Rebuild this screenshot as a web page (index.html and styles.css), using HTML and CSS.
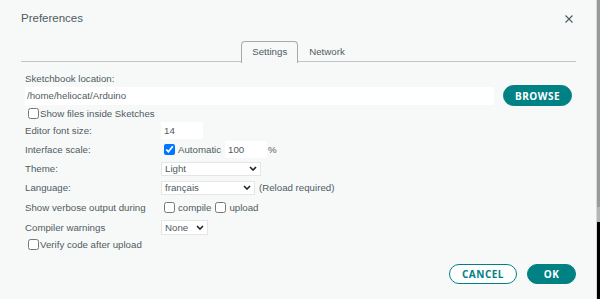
FILE: index.html
```html
<!DOCTYPE html>
<html lang="en">
<head>
  <meta charset="UTF-8" />
  <title>Preferences</title>
  <link rel="stylesheet" href="styles.css">
</head>
<body>

<div class="screen">
  <div class="dialog">
    <div class="dialog-head">
      <span class="title">Preferences</span>
      <svg class="close" width="8" height="8" viewBox="0 0 8 8">
        <path d="M0.5 0.5 L7.5 7.5 M7.5 0.5 L0.5 7.5" stroke="#4e5b61" stroke-width="1.1" fill="none" />
      </svg>
    </div>

    <div class="tabs">
      <div class="tab active">Settings</div>
      <div class="tab">Network</div>
    </div>

    <div class="settings">
      <div class="label-top">Sketchbook location:</div>
      <div class="path-row">
        <input type="text" class="textbox path" value="/home/heliocat/Arduino" />
        <button class="btn primary browse">BROWSE</button>
      </div>
      <label class="check-row"><input type="checkbox" /> Show files inside Sketches</label>

      <div class="row">
        <span class="row-label">Editor font size:</span>
        <input type="text" class="textbox small" value="14" />
      </div>
      <div class="row">
        <span class="row-label">Interface scale:</span>
        <input type="checkbox" class="box" checked />
        <span class="box-text">Automatic</span>
        <input type="text" class="textbox small scale" value="100" />
        <span class="unit">%</span>
      </div>
      <div class="row">
        <span class="row-label">Theme:</span>
        <div class="select theme">
          <span>Light</span>
          <svg width="8" height="5" viewBox="0 0 8 5"><path d="M1 1 L4 4 L7 1" stroke="#222" stroke-width="1.6" fill="none" /></svg>
        </div>
      </div>
      <div class="row">
        <span class="row-label">Language:</span>
        <div class="select language">
          <span>français</span>
          <svg width="8" height="5" viewBox="0 0 8 5"><path d="M1 1 L4 4 L7 1" stroke="#222" stroke-width="1.6" fill="none" /></svg>
        </div>
        <span class="note">(Reload required)</span>
      </div>
      <div class="row verbose">
        <span class="row-label">Show verbose output during</span>
        <input type="checkbox" class="box" />
        <span class="box-text">compile</span>
        <input type="checkbox" class="box second" />
        <span class="box-text">upload</span>
      </div>
      <div class="row">
        <span class="row-label">Compiler warnings</span>
        <div class="select warnings">
          <span>None</span>
          <svg width="8" height="5" viewBox="0 0 8 5"><path d="M1 1 L4 4 L7 1" stroke="#222" stroke-width="1.6" fill="none" /></svg>
        </div>
      </div>
      <label class="check-row verify"><input type="checkbox" /> Verify code after upload</label>
    </div>

    <div class="footer">
      <button class="btn outline">CANCEL</button>
      <button class="btn primary ok">OK</button>
    </div>
  </div>
  <div class="edge"></div>
</div>

</body>
</html>
```

FILE: styles.css
```css
body {
  margin: 0;
  font-family: 'Liberation Sans', Arial, sans-serif;
  font-size: 9.7px;
  color: #505b60;
  background-color: #f7f9f9;
  overflow: hidden;
}

.screen {
  display: flex;
  width: 600px;
  height: 299px;
}

.dialog {
  flex: 1;
  padding: 0 20px 0 21px;
  background-color: #f7f9f9;
}

.edge {
  width: 3px;
  border-left: 1px solid #d8dada;
  background: linear-gradient(#999b9b 0 207px, #b4b6b6 207px 222px, #000 222px);
}

.dialog-head {
  height: 41px;
  box-sizing: border-box;
  padding-top: 11px;
  display: flex;
  justify-content: space-between;
  align-items: flex-start;
}

.title {
  font-size: 11.5px;
  line-height: 14px;
  color: #4e5b61;
}

.close {
  margin-top: 4px;
  margin-right: 3px;
}

.tabs {
  display: flex;
  justify-content: center;
  height: 20px;
  border-bottom: 1px solid #c3c5c5;
}

.tab {
  padding: 0 10px;
  line-height: 20px;
  height: 20px;
  border: 1px solid transparent;
  border-bottom: none;
  border-radius: 4px 4px 0 0;
}

.tab.active {
  border-color: #a7aaaa;
  background-color: #f7f9f9;
  height: 21px;
}

.settings {
  padding: 0 4px;
  margin-top: 11px;
}

.label-top {
  line-height: 12px;
}

.path-row {
  display: flex;
  align-items: center;
  height: 21px;
}

.textbox {
  border: none;
  outline: none;
  background-color: #fff;
  font-family: 'Liberation Sans', Arial, sans-serif;
  font-size: 9.7px;
  color: #505b60;
  margin: 0;
  box-sizing: border-box;
}

.path {
  flex: 1;
  height: 18px;
  padding: 0 2px;
}

.small {
  width: 42px;
  height: 17px;
  padding: 0 3px;
}

.scale {
  margin-left: 4px;
}

.btn {
  font-family: 'Open Sans', sans-serif;
  font-weight: bold;
  font-size: 10px;
  letter-spacing: 0.5px;
  border-radius: 11px;
  padding: 0;
  cursor: pointer;
}

.primary {
  background-color: #008184;
  border: 1.5px solid #008184;
  color: #fff;
}

.outline {
  background-color: #fff;
  border: 1.5px solid #008184;
  color: #008184;
  width: 68px;
  height: 20px;
}

.browse {
  margin-left: 9px;
  width: 69px;
  height: 21px;
}

.ok {
  width: 49px;
  height: 20px;
}

.check-row {
  display: flex;
  align-items: center;
  gap: 1px;
  height: 15px;
  padding-left: 3px;
}

.check-row input,
.box {
  width: 11px;
  height: 11px;
  margin: 0;
}

.row {
  display: flex;
  align-items: center;
  height: 19px;
}

.row.verbose {
  height: 21px;
}

.row-label {
  width: 136px;
  flex-shrink: 0;
}

.box {
  margin-left: 3px;
}

.box.second {
  margin-left: 4px;
}

.box-text {
  margin-left: 3px;
}

.unit {
  margin-left: 1px;
}

.select {
  display: flex;
  align-items: center;
  justify-content: space-between;
  box-sizing: border-box;
  height: 14px;
  padding: 0 3px;
  background-color: #fff;
  border: 1px solid #e4e6e6;
}

.theme {
  width: 100px;
}

.language {
  width: 94px;
}

.warnings {
  width: 47px;
  height: 15px;
}

.note {
  margin-left: 4px;
}

.verify {
  height: 14px;
}

.footer {
  display: flex;
  justify-content: flex-end;
  gap: 10px;
  margin-top: 13px;
}
```
